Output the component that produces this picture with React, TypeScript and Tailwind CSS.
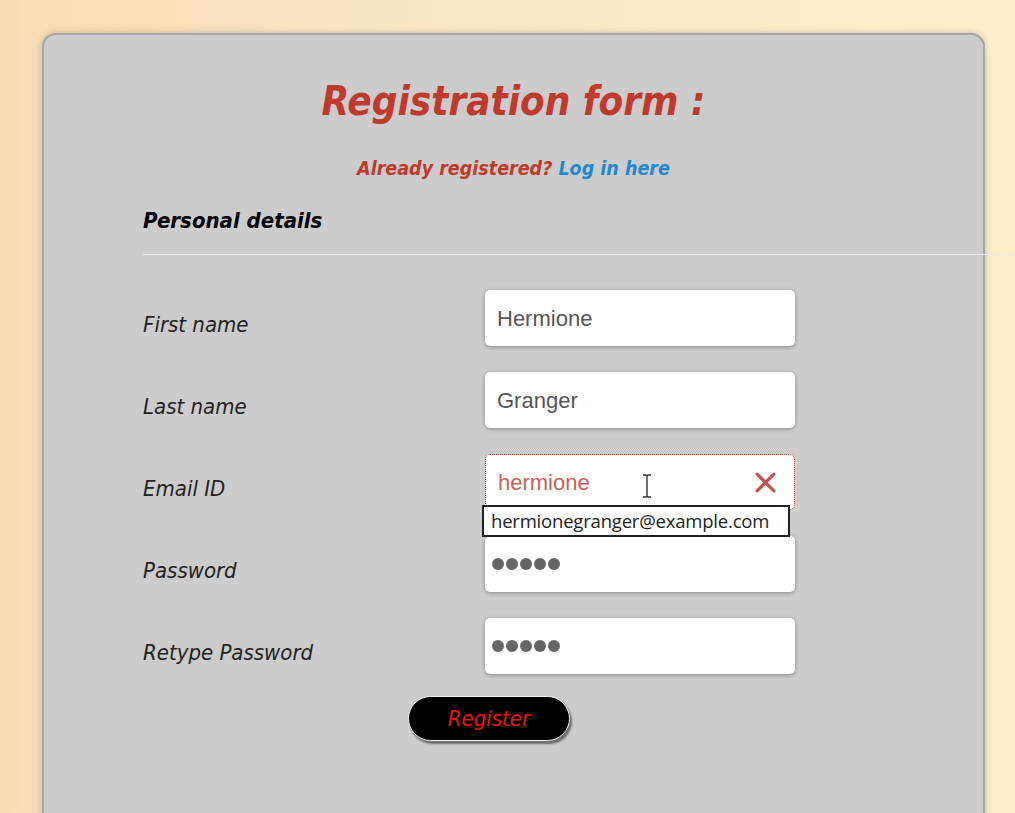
import React from "react";

const tahoma = "font-['DejaVu_Sans_Condensed','DejaVu_Sans',sans-serif]";

/* ---------------- Pieces ---------------- */

const Dots = () => (
  <div className="flex items-center gap-[2px] -ml-[5px]">
    {[0, 1, 2, 3, 4].map((i) => (
      <span key={i} className="block w-[12px] h-[12px] rounded-full bg-[#666]" />
    ))}
  </div>
);

const Field = ({ children, className = "" }: { children: React.ReactNode; className?: string }) => (
  <div
    className={`relative flex items-center w-[310px] h-[56px] bg-white rounded-[5px] px-[12px] shadow-[0_1px_4px_rgba(0,0,0,0.35)] ${className}`}
  >
    {children}
  </div>
);

/* ---------------- Page ---------------- */

export default function App() {
  const rows: { label: string; field: React.ReactNode }[] = [
    {
      label: "First name",
      field: (
        <Field>
          <span className="font-['Liberation_Sans',sans-serif] text-[22px] text-[#555]">Hermione</span>
        </Field>
      ),
    },
    {
      label: "Last name",
      field: (
        <Field>
          <span className="font-['Liberation_Sans',sans-serif] text-[22px] text-[#555]">Granger</span>
        </Field>
      ),
    },
    {
      label: "Email ID",
      field: (
        <Field className="border border-dotted border-[#c0392b] shadow-none">
          <span className="font-['Liberation_Sans',sans-serif] text-[22px] text-[#c9605a]">hermione</span>
          {/* text cursor */}
          <svg className="absolute left-[155px] top-[19px]" width="12" height="24" viewBox="0 0 12 24">
            <path d="M2 1h3l1 1 1-1h3M6 2v20M2 23h3l1-1 1 1h3" fill="none" stroke="#333" strokeWidth="1.4" />
          </svg>
          <svg className="absolute right-[18px] top-[17px]" width="21" height="21" viewBox="0 0 20 20">
            <path d="M2 2L18 18M18 2L2 18" stroke="#c9504a" strokeWidth="3" strokeLinecap="round" />
          </svg>
          {/* autofill suggestion */}
          <div className="absolute left-[-4px] top-[50px] z-10 w-[308px] h-[32px] bg-white border-2 border-[#222] flex items-center px-[7px] font-['Open_Sans',sans-serif] text-[18.5px] text-[#222] whitespace-nowrap tracking-[-0.2px]">
            hermionegranger@example.com
          </div>
        </Field>
      ),
    },
    {
      label: "Password",
      field: (
        <Field>
          <Dots />
        </Field>
      ),
    },
    {
      label: "Retype Password",
      field: (
        <Field>
          <Dots />
        </Field>
      ),
    },
  ];

  return (
    <div className="min-h-[813px] h-[813px] overflow-hidden bg-gradient-to-r from-[#f7dcb3] via-[#fbe6c4] to-[#fdedca] pt-[33px] pl-[42px]">
      <div
        className={`w-[943px] h-[800px] bg-[#cccccc] border-2 border-[#a6a6a6] rounded-[14px] shadow-[0_0_6px_rgba(0,0,0,0.2)] pt-[42px] pl-[99px] ${tahoma}`}
      >
        <h1 className="h-[48px] leading-[48px] text-center -ml-[99px] text-[40px] font-bold italic text-[#c0392b]">
          Registration form :
        </h1>

        <p className="mt-[32px] h-[24px] leading-[24px] text-center -ml-[99px] text-[19.5px] font-bold italic text-[#c0392b]">
          Already registered? <a className="text-[#1b8ad3]">Log in here</a>
        </p>

        <h2 className="mt-[26px] h-[28px] leading-[28px] text-[22px] font-bold italic text-black">
          Personal details
        </h2>

        <div className="mt-[19px] w-[872px] h-px bg-[#ececec]" />

        <div className="mt-[35px] flex flex-col gap-[26px]">
          {rows.map((r) => (
            <div key={r.label} className="flex items-center">
              <span className="w-[342px] pt-[12px] text-[22px] italic text-[#222]">{r.label}</span>
              {r.field}
            </div>
          ))}
        </div>

        <button className="mt-[22px] ml-[265px] w-[162px] h-[45px] rounded-full bg-black border border-[#f2f2f2] shadow-[2px_3px_2px_#6e6e6e] text-[22px] italic text-[#e8160c]">
          Register
        </button>
      </div>
    </div>
  );
}
